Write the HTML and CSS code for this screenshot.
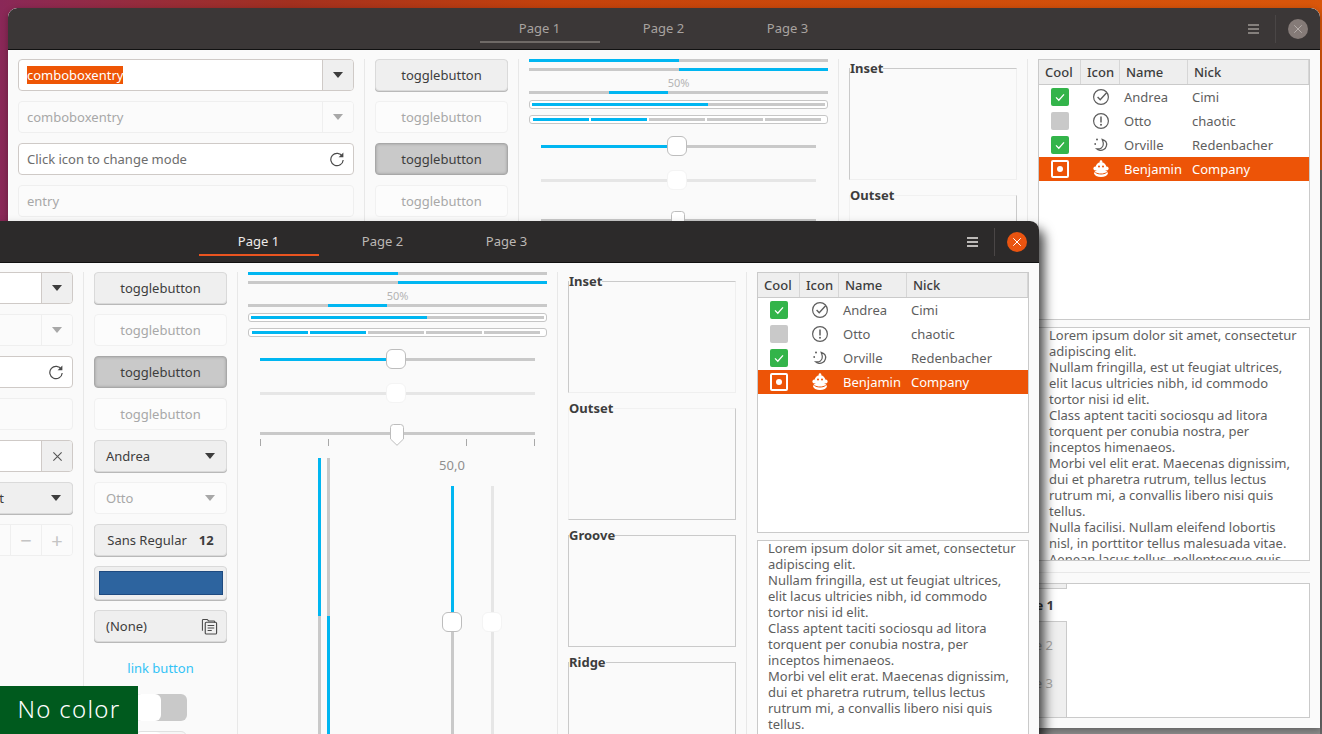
FILE: index.html
```html
<!DOCTYPE html>
<html lang="en">

<head>
    <meta charset="UTF-8">
    <title>Widget Factory</title>
    <link rel="stylesheet" href="styles.css">
</head>

<body>
    <!-- icons used by the tree and the buttons -->
    <svg class="sprite" aria-hidden="true">
        <symbol id="i-check" viewBox="0 0 18 18">
            <circle cx="9" cy="9" r="7.4" fill="none" stroke="currentColor" stroke-width="1.2"/>
            <path d="M5.6 9l2.6 2.8 6.4-7" fill="none" stroke="currentColor" stroke-width="1.4"/>
        </symbol>
        <symbol id="i-warn" viewBox="0 0 18 18">
            <circle cx="9" cy="9" r="7.4" fill="none" stroke="currentColor" stroke-width="1.2"/>
            <path d="M9 4.4v6" fill="none" stroke="currentColor" stroke-width="1.5"/>
            <circle cx="9" cy="12.8" r="1" fill="currentColor"/>
        </symbol>
        <symbol id="i-moon" viewBox="0 0 18 18">
            <path d="M10.2 3.4c3.4 1 5 3.6 4.2 6.6-.9 3.2-4 5-7.2 4.2-1-.2-1.8-.7-2.500-1.400 3.600.6 6.800-1.200 6.600-5-.1-1.600-.5-3-1.100-4.400z" fill="none" stroke="currentColor" stroke-width="1.2"/>
            <circle cx="5" cy="3.6" r="1" fill="currentColor"/>
            <circle cx="3.2" cy="8" r=".9" fill="currentColor"/>
        </symbol>
        <symbol id="i-monkey" viewBox="0 0 18 18">
            <circle cx="9" cy="1.500" r="1.300" fill="currentColor"/>
            <circle cx="9" cy="7.500" r="5.400" fill="currentColor"/>
            <circle cx="3.300" cy="8.500" r="1.900" fill="currentColor"/>
            <circle cx="14.700" cy="8.500" r="1.900" fill="currentColor"/>
            <ellipse cx="9" cy="13.300" rx="6.800" ry="3.800" fill="currentColor"/>
            <path d="M3.400 12.500c3 2 8.200 2 11.200 0" stroke="#ed5407" stroke-width="1" fill="none"/>
            <circle cx="7" cy="6.500" r="1" fill="#ed5407"/>
            <circle cx="11" cy="6.500" r="1" fill="#ed5407"/>
        </symbol>
        <symbol id="i-reload" viewBox="0 0 16 16">
            <path d="M13.4 5.400A6.200 6.200 0 1 0 14.200 9" fill="none" stroke="currentColor" stroke-width="1.200"/>
            <path d="M14.400 1.400v4.800H9.600z" fill="currentColor"/>
        </symbol>
        <symbol id="i-clear" viewBox="0 0 12 12">
            <path d="M1.500 1.500l9 9M10.500 1.500l-9 9" fill="none" stroke="currentColor" stroke-width="1.200"/>
        </symbol>
        <symbol id="i-files" viewBox="0 0 18 18">
            <path d="M1.500 13.500V2.400c0-.5.4-.9.9-.9h4.200l1.400 1.600h5.600c.5 0 .9.4.9.9v1" fill="none" stroke="currentColor" stroke-width="1.100"/>
            <rect x="4.500" y="4.500" width="12" height="12.500" rx="1.200" fill="none" stroke="currentColor" stroke-width="1.200"/>
            <path d="M7 8h7M7 10.600h7M7 13.200h4.400" fill="none" stroke="currentColor" stroke-width="1.100"/>
        </symbol>
        <symbol id="i-mark" viewBox="0 0 14 22">
            <path d="M3.500.5h7a3 3 0 0 1 3 3V15L7 21.300.5 15V3.500a3 3 0 0 1 3-3z" fill="#fff" stroke="#bdbdbd"/>
        </symbol>
    </svg>

    <!-- 后面的窗口，下面被挡住的部分不用写 -->
    <section class="window window-back">
        <header class="titlebar">
            <div></div>
            <nav class="tabs">
                <a class="tab tab-on">Page 1</a>
                <a class="tab">Page 2</a>
                <a class="tab">Page 3</a>
            </nav>
            <div class="title-actions">
                <span class="menu-icon"><i></i><i></i><i></i></span>
                <span class="title-sep"></span>
                <span class="close-btn"><svg><use href="#i-clear"/></svg></span>
            </div>
        </header>
        <main class="content">
            <div class="col col-entries">
                <div class="entry"><span class="entry-text"><span class="sel">comboboxentry</span></span><span class="entry-btn"><i class="arrow"></i></span></div>
                <div class="entry off"><span class="entry-text">comboboxentry</span><span class="entry-btn"><i class="arrow"></i></span></div>
                <div class="entry"><span class="entry-text hint">Click icon to change mode</span><svg class="entry-icon"><use href="#i-reload"/></svg></div>
                <div class="entry off"><span class="entry-text">entry</span></div>
            </div>
            <div class="sep"></div>
            <div class="col col-buttons">
                <div class="btn">togglebutton</div>
                <div class="btn off">togglebutton</div>
                <div class="btn pressed">togglebutton</div>
                <div class="btn off">togglebutton</div>
            </div>
            <div class="sep"></div>
            <div class="col col-progress">
                <div class="bar"><span class="fill w-half"></span></div>
                <div class="bar bar-rev"><span class="fill w-half"></span></div>
                <div class="pct">50%</div>
                <div class="bar bar-pulse"><span class="fill"></span></div>
                <div class="box"><div class="bar"><span class="fill w-level"></span></div></div>
                <div class="box box-steps"><i class="on"></i><i class="on"></i><i></i><i></i><i></i></div>
                <div class="slider"><span class="fill"></span><span class="thumb"></span></div>
                <div class="slider slider-off"><span class="thumb"></span></div>
                <div class="slider slider-marks">
                    <svg class="mark"><use href="#i-mark"/></svg>
                </div>
            </div>
            <div class="sep"></div>
            <div class="col col-frames">
                <fieldset class="frame inset"><legend>Inset</legend></fieldset>
                <fieldset class="frame outset"><legend>Outset</legend></fieldset>
            </div>
            <div class="sep"></div>
            <div class="col col-tree">
                <div class="tree">
                    <div class="tree-head"><span>Cool</span><span>Icon</span><span>Name</span><span>Nick</span></div>
                    <div class="tree-row"><span class="check on"><svg viewBox="0 0 18 18"><path d="M5 9.400l2.800 2.800 5.200-5.800"/></svg></span><svg class="tree-icon"><use href="#i-check"/></svg><span>Andrea</span><span>Cimi</span></div>
                    <div class="tree-row"><span class="check"></span><svg class="tree-icon"><use href="#i-warn"/></svg><span>Otto</span><span>chaotic</span></div>
                    <div class="tree-row"><span class="check on"><svg viewBox="0 0 18 18"><path d="M5 9.400l2.800 2.800 5.200-5.800"/></svg></span><svg class="tree-icon"><use href="#i-moon"/></svg><span>Orville</span><span>Redenbacher</span></div>
                    <div class="tree-row picked"><span class="check mixed"><i></i></span><svg class="tree-icon"><use href="#i-monkey"/></svg><span>Benjamin</span><span>Company</span></div>
                </div>
                <div class="textview">
                    <div class="tv-text">
                        Lorem ipsum dolor sit amet, consectetur<br>adipiscing elit.<br>
                        Nullam fringilla, est ut feugiat ultrices,<br>elit lacus ultricies nibh, id commodo<br>tortor nisi id elit.<br>
                        Class aptent taciti sociosqu ad litora<br>torquent per conubia nostra, per<br>inceptos himenaeos.<br>
                        Morbi vel elit erat. Maecenas dignissim,<br>dui et pharetra rutrum, tellus lectus<br>rutrum mi, a convallis libero nisi quis<br>tellus.<br>
                        Nulla facilisi. Nullam eleifend lobortis<br>nisl, in porttitor tellus malesuada vitae.<br>Aenean lacus tellus, pellentesque quis
                    </div>
                </div>
                <div class="hsep"></div>
                <div class="notebook">
                    <div class="nb-tabs">
                        <div class="nb-cap"></div>
                        <div class="nb-tab nb-on">Page 1</div>
                        <div class="nb-rest"><div class="nb-tab">Page 2</div><div class="nb-tab">Page 3</div></div>
                    </div>
                    <div class="nb-page"></div>
                </div>
            </div>
        </main>
    </section>

    <!-- 前面的窗口，左边超出屏幕 -->
    <section class="window window-front">
        <header class="titlebar">
            <div></div>
            <nav class="tabs">
                <a class="tab tab-on">Page 1</a>
                <a class="tab">Page 2</a>
                <a class="tab">Page 3</a>
            </nav>
            <div class="title-actions">
                <span class="menu-icon"><i></i><i></i><i></i></span>
                <span class="title-sep"></span>
                <span class="close-btn"><svg><use href="#i-clear"/></svg></span>
            </div>
        </header>
        <main class="content">
            <div class="col col-entries">
                <div class="entry"><span class="entry-text"></span><span class="entry-btn"><i class="arrow"></i></span></div>
                <div class="entry off"><span class="entry-text"></span><span class="entry-btn"><i class="arrow"></i></span></div>
                <div class="entry"><span class="entry-text"></span><svg class="entry-icon"><use href="#i-reload"/></svg></div>
                <div class="entry off"><span class="entry-text"></span></div>
                <div class="entry"><span class="entry-text"></span><span class="entry-btn"><svg class="clear-icon"><use href="#i-clear"/></svg></span></div>
                <div class="btn btn-combo btn-right"><span>Right</span><i class="arrow"></i></div>
                <div class="entry off"><span class="entry-text"></span><span class="entry-btn spin">−</span><span class="entry-btn spin">+</span></div>
            </div>
            <div class="sep"></div>
            <div class="col col-buttons">
                <div class="btn">togglebutton</div>
                <div class="btn off">togglebutton</div>
                <div class="btn pressed">togglebutton</div>
                <div class="btn off">togglebutton</div>
                <div class="btn btn-combo"><span>Andrea</span><i class="arrow"></i></div>
                <div class="btn btn-combo off"><span>Otto</span><i class="arrow"></i></div>
                <div class="btn btn-font"><span>Sans Regular</span><b>12</b></div>
                <div class="btn btn-color"><span class="swatch"></span></div>
                <div class="btn btn-combo"><span>(None)</span><svg class="file-icon"><use href="#i-files"/></svg></div>
                <a class="link-btn">link button</a>
                <div class="switch"><span class="knob"></span></div>
                <div class="switch switch-off"><span class="knob"></span></div>
            </div>
            <div class="sep"></div>
            <div class="col col-progress">
                <div class="bar"><span class="fill w-half"></span></div>
                <div class="bar bar-rev"><span class="fill w-half"></span></div>
                <div class="pct">50%</div>
                <div class="bar bar-pulse"><span class="fill"></span></div>
                <div class="box"><div class="bar"><span class="fill w-level"></span></div></div>
                <div class="box box-steps"><i class="on"></i><i class="on"></i><i></i><i></i><i></i></div>
                <div class="slider"><span class="fill"></span><span class="thumb"></span></div>
                <div class="slider slider-off"><span class="thumb"></span></div>
                <div class="slider slider-marks">
                    <svg class="mark"><use href="#i-mark"/></svg>
                    <i class="tick t1"></i><i class="tick t2"></i><i class="tick t3"></i><i class="tick t4"></i>
                </div>
                <div class="verticals">
                    <div class="vbar"><span class="vfill"></span></div>
                    <div class="vbar vbar-rev"><span class="vfill"></span></div>
                    <div class="vslider"><label>50,0</label><div class="vtrack"><span class="vfill"></span><span class="thumb"></span></div></div>
                    <div class="vslider vslider-off"><label></label><div class="vtrack"><span class="thumb"></span></div></div>
                </div>
            </div>
            <div class="sep"></div>
            <div class="col col-frames">
                <fieldset class="frame inset"><legend>Inset</legend></fieldset>
                <fieldset class="frame outset"><legend>Outset</legend></fieldset>
                <fieldset class="frame groove"><legend>Groove</legend></fieldset>
                <fieldset class="frame ridge"><legend>Ridge</legend></fieldset>
            </div>
            <div class="sep"></div>
            <div class="col col-tree">
                <div class="tree">
                    <div class="tree-head"><span>Cool</span><span>Icon</span><span>Name</span><span>Nick</span></div>
                    <div class="tree-row"><span class="check on"><svg viewBox="0 0 18 18"><path d="M5 9.400l2.800 2.800 5.200-5.800"/></svg></span><svg class="tree-icon"><use href="#i-check"/></svg><span>Andrea</span><span>Cimi</span></div>
                    <div class="tree-row"><span class="check"></span><svg class="tree-icon"><use href="#i-warn"/></svg><span>Otto</span><span>chaotic</span></div>
                    <div class="tree-row"><span class="check on"><svg viewBox="0 0 18 18"><path d="M5 9.400l2.800 2.800 5.200-5.800"/></svg></span><svg class="tree-icon"><use href="#i-moon"/></svg><span>Orville</span><span>Redenbacher</span></div>
                    <div class="tree-row picked"><span class="check mixed"><i></i></span><svg class="tree-icon"><use href="#i-monkey"/></svg><span>Benjamin</span><span>Company</span></div>
                </div>
                <div class="textview">
                    <div class="tv-text">
                        Lorem ipsum dolor sit amet, consectetur<br>adipiscing elit.<br>
                        Nullam fringilla, est ut feugiat ultrices,<br>elit lacus ultricies nibh, id commodo<br>tortor nisi id elit.<br>
                        Class aptent taciti sociosqu ad litora<br>torquent per conubia nostra, per<br>inceptos himenaeos.<br>
                        Morbi vel elit erat. Maecenas dignissim,<br>dui et pharetra rutrum, tellus lectus<br>rutrum mi, a convallis libero nisi quis<br>tellus.
                    </div>
                </div>
            </div>
        </main>
    </section>

    <div class="badge">No color</div>
</body>

</html>
```

FILE: styles.css
```css
/* desktop behind the windows */
html,
body {
    height: 100%;
    margin: 0;
    overflow: hidden;
}

body {
    position: relative;
    font-family: "Noto Sans", "Open Sans", sans-serif;
    font-size: 13px;
    color: #3d3d3d;
    background:
        linear-gradient(#666 0 0) right 170px / 2px 100% no-repeat,
        linear-gradient(#8a8a8a 0 0) left 728px / 100% 6px no-repeat,
        linear-gradient(90deg, #8a2858 0, #a3301f 22%, #c4420c 42%, #d9560a 100%);
}

.sprite {
    display: none;
}

/* windows */
.window {
    position: absolute;
    width: 1312px;
    height: 720px;
    border-radius: 9px 9px 0 0;
    background: #fafafa;
    overflow: hidden;
}

.window-back {
    left: 8px;
    top: 8px;
    box-shadow: 0 2px 6px rgba(0, 0, 0, .3);
}

.window-front {
    left: -273px;
    top: 221px;
    overflow: visible;
    box-shadow: 5px 8px 12px rgba(0, 0, 0, .75);
}

.titlebar {
    display: grid;
    grid-template-columns: 1fr auto 1fr;
    height: 41px;
    border-bottom: 1px solid #111;
    border-radius: 9px 9px 0 0;
    background: #3b3737;
    color: #a8a3a0;
}

.window-front .titlebar {
    background: #2c2a2a;
    color: #bcb8b5;
}

.tabs {
    display: flex;
}

.tab {
    width: 120px;
    height: 35px;
    margin: 0 2px;
    padding: 12px 1px 0 0;
    box-sizing: border-box;
    border-bottom: 2px solid transparent;
    line-height: 17px;
    text-align: center;
}

.tab-on {
    border-bottom-color: #6f6a67;
}

.window-front .tab-on {
    border-bottom-color: #e95420;
    color: #efecea;
}

.title-actions {
    display: flex;
    align-items: center;
    justify-content: flex-end;
    padding-right: 12px;
}

.menu-icon {
    display: flex;
    flex-direction: column;
    gap: 2px;
    width: 11px;
    margin-right: 16px;
    color: #85807d;
}

.window-front .menu-icon {
    color: #bdbab8;
}

.menu-icon i {
    height: 2px;
    background: currentColor;
}

.title-sep {
    width: 1px;
    height: 28px;
    margin-right: 12px;
    background: #4a4646;
}

.close-btn {
    display: flex;
    align-items: center;
    justify-content: center;
    width: 20px;
    height: 20px;
    border-radius: 50%;
    background: #857b78;
    color: #b5adaa;
}

.window-front .close-btn {
    background: #ea5410;
    color: #fff;
}

.close-btn svg {
    width: 10px;
    height: 10px;
}

/* columns */
.content {
    display: flex;
    height: 659px;
    padding: 9px 10px 10px;
}

.col {
    display: flex;
    flex-direction: column;
    flex: none;
}

.sep {
    flex: none;
    width: 1px;
    margin: 0 10px;
    background: #e8e8e8;
}

.col-entries {
    width: 336px;
    gap: 10px;
}

.col-buttons {
    width: 133px;
    gap: 10px;
}

.col-progress {
    width: 299px;
}

.col-frames {
    width: 168px;
    padding-top: 1px;
    gap: 7px;
}

.col-tree {
    width: 272px;
}

/* entries */
.entry {
    display: flex;
    align-items: center;
    height: 32px;
    box-sizing: border-box;
    border: 1px solid #cfcac7;
    border-radius: 4px;
    background: #fff;
    overflow: hidden;
}

.entry.off {
    border-color: #efefef;
    background: #fbfbfb;
    color: #a8a8a8;
}

.entry-text {
    flex: 1;
    padding-left: 8px;
}

.sel {
    background: #ee5505;
    color: #fff;
}

.hint {
    color: #6d6d6d;
}

.entry-icon {
    width: 16px;
    height: 16px;
    margin-right: 8px;
    color: #4a4a4a;
}

.entry-btn {
    display: flex;
    align-items: center;
    justify-content: center;
    flex: none;
    width: 30px;
    height: 100%;
    border-left: 1px solid #cfcac7;
    background: #efefef;
}

.off .entry-btn {
    border-left-color: #efefef;
    background: #fbfbfb;
}

.spin {
    color: #c4c4c4;
    font-size: 20px;
}

.clear-icon {
    width: 11px;
    height: 11px;
    color: #555;
}

.arrow {
    width: 0;
    height: 0;
    border: 5px solid transparent;
    border-top: 6px solid #3d3d3d;
    border-bottom: 0;
}

.off .arrow {
    border-top-color: #a8a8a8;
}

/* buttons */
.btn {
    display: flex;
    align-items: center;
    justify-content: center;
    height: 32px;
    box-sizing: border-box;
    border: 1px solid #dadada;
    border-radius: 4px;
    background: #efefef;
    box-shadow: 0 1px #b9b9b9;
}

.btn.off {
    border-color: #f1f1f1;
    background: #fcfcfc;
    box-shadow: none;
    color: #a8a8a8;
}

.pressed {
    border-color: #a8a8a8;
    background: #c9c9c9;
    box-shadow: inset 0 0 3px #9a9a9a;
}

.btn-combo {
    justify-content: space-between;
    padding: 0 11px;
}

.btn-right {
    justify-content: flex-end;
    gap: 47px;
}

.btn-font {
    gap: 12px;
}

.btn-color {
    height: 34px;
}

.swatch {
    width: 124px;
    height: 24px;
    box-sizing: border-box;
    border: 1px solid #1e4a80;
    background: #2d649f;
}

.file-icon {
    width: 17px;
    height: 17px;
    margin-right: -3px;
    color: #4a4a4a;
}

.link-btn {
    height: 32px;
    line-height: 32px;
    text-align: center;
    color: #33c3f6;
}

.switch {
    position: relative;
    flex: none;
    align-self: center;
    width: 52px;
    height: 27px;
    border-radius: 6px;
    background: #c9c9c9;
}

.switch-off {
    box-sizing: border-box;
    border: 1px solid #e0e0e0;
    background: #f6f6f6;
}

.knob {
    position: absolute;
    left: 0;
    top: 0;
    width: 26px;
    height: 100%;
    border-radius: 6px;
    background: #fff;
}

/* progress bars */
.bar {
    position: relative;
    flex: none;
    height: 3px;
    background: #c9c9c9;
}

.bar + .bar {
    margin-top: 6px;
}

.fill {
    position: absolute;
    left: 0;
    top: 0;
    height: 100%;
    background: #00b6f1;
}

.w-half {
    width: 50%;
}

.w-level {
    width: 60%;
}

.bar-rev .fill {
    left: 50%;
}

.bar-pulse .fill {
    left: 80px;
    width: 59px;
}

.pct {
    margin-top: 5px;
    height: 14px;
    line-height: 14px;
    font-size: 11px;
    text-align: center;
    color: #b4b4b4;
}

.pct + .bar {
    margin-top: 1px;
}

.box {
    flex: none;
    margin-top: 6px;
    padding: 2px;
    border: 1px solid #c6c6c6;
    border-radius: 3px;
    background: #fff;
}

.box-steps {
    display: flex;
    gap: 2px;
    height: 3px;
    padding: 2px 6px 2px 3px;
}

.box-steps i {
    flex: 1;
    background: #c9c9c9;
}

.box-steps i.on {
    background: #00b6f1;
}

/* sliders */
.slider {
    position: relative;
    flex: none;
    height: 3px;
    margin: 21px 12px 0;
    background: #c9c9c9;
}

.slider .fill {
    width: 126px;
}

.slider-off {
    margin-top: 31px;
    background: #e6e6e6;
}

.slider-marks {
    margin-top: 37px;
}

.thumb {
    position: absolute;
    left: 126px;
    top: -9px;
    width: 20px;
    height: 20px;
    box-sizing: border-box;
    border: 1px solid #bdbdbd;
    border-radius: 6px;
    background: #fff;
}

.slider-off .thumb,
.vslider-off .thumb {
    border-color: #f4f4f4;
}

.mark {
    position: absolute;
    left: 130px;
    top: -8px;
    width: 14px;
    height: 22px;
}

.tick {
    position: absolute;
    top: 7px;
    width: 1px;
    height: 7px;
    background: #a8a8a8;
}

.t1 { left: 0; }
.t2 { left: 68px; }
.t3 { left: 206px; }
.t4 { left: 274px; }

.verticals {
    display: flex;
    flex: 1;
    margin-top: 23px;
    padding-left: 70px;
}

.vbar,
.vtrack {
    position: relative;
    flex: none;
    width: 3px;
    background: #c9c9c9;
}

.vbar + .vbar {
    margin-left: 6px;
}

.vfill {
    position: absolute;
    left: 0;
    top: 0;
    width: 100%;
    height: 158px;
    background: #00b6f1;
}

.vbar-rev .vfill {
    top: 158px;
    height: auto;
    bottom: 0;
}

.vslider {
    display: flex;
    flex-direction: column;
    align-items: center;
    flex: none;
    width: 40px;
    margin-left: 102px;
}

.vslider-off {
    margin-left: 0;
}

.vslider label {
    height: 28px;
    line-height: 15px;
    color: #8f8f8f;
}

.vtrack {
    flex: 1;
}

.vslider-off .vtrack {
    background: #e6e6e6;
}

.vtrack .vfill {
    height: 126px;
}

.vtrack .thumb {
    left: -9px;
    top: 126px;
}

/* frames */
.frame {
    flex: none;
    height: 120px;
    min-width: 0;
    margin: 0;
    padding: 0;
    box-sizing: border-box;
    border: 1px solid #cacaca;
}

.frame legend {
    padding: 0;
    font-weight: 700;
    line-height: 16px;
}

.inset {
    border-right-color: #efefef;
    border-bottom-color: #efefef;
}

.outset {
    border-top-color: #f1f1f1;
    border-left-color: #f1f1f1;
}

/* tree */
.tree {
    flex: none;
    height: 261px;
    box-sizing: border-box;
    border: 1px solid #cacaca;
    background: #fff;
}

.tree-head,
.tree-row {
    display: grid;
    grid-template-columns: 42px 39px 68px 1fr;
    align-items: center;
}

.tree-head {
    height: 24px;
    border-bottom: 1px solid #cacaca;
    background: #eeeeee;
    font-weight: 500;
}

.tree-head span {
    height: 100%;
    padding-left: 6px;
    box-sizing: border-box;
    border-right: 1px solid #d6d6d6;
    line-height: 24px;
}

.tree-row {
    height: 24px;
    color: #5e5e5e;
}

.tree-row span:nth-child(n+3) {
    padding-left: 4px;
}

.picked {
    background: #ed5407;
    color: #fff;
}

.check {
    display: flex;
    align-items: center;
    justify-content: center;
    justify-self: center;
    width: 18px;
    height: 18px;
    box-sizing: border-box;
    border-radius: 2px;
    background: #c9c9c9;
}

.check.on {
    background: #33b44a;
}

.check svg {
    width: 18px;
    height: 18px;
    fill: none;
    stroke: #fff;
    stroke-width: 1.3;
}

.check.mixed {
    border: 2px solid #fff;
    background: none;
}

.check.mixed i {
    width: 6px;
    height: 6px;
    border-radius: 50%;
    background: #fff;
}

.tree-icon {
    justify-self: center;
    width: 18px;
    height: 18px;
    color: #5e5e5e;
}

.picked .tree-icon {
    color: #fff;
}

/* text view */
.textview {
    flex: none;
    height: 234px;
    margin-top: 7px;
    padding: 0 10px;
    box-sizing: border-box;
    border: 1px solid #cacaca;
    background: #fff;
    line-height: 16px;
    color: #5e5e5e;
    white-space: nowrap;
    overflow: hidden;
}

.tv-text {
    margin-top: -1px;
}

.hsep {
    flex: none;
    height: 1px;
    margin-top: 11px;
    background: #e8e8e8;
}

/* notebook, its tabs run in under the front window */
.notebook {
    display: flex;
    flex: none;
    height: 135px;
    margin: 10px 0 0 -40px;
    box-sizing: border-box;
    border: 1px solid #cacaca;
    background: #fff;
}

.nb-tabs {
    display: flex;
    flex-direction: column;
    flex: none;
    width: 68px;
}

.nb-cap {
    height: 4px;
    border-right: 1px solid #cacaca;
    border-bottom: 1px solid #cacaca;
    background: #efefef;
}

.nb-tab {
    height: 38px;
    padding-right: 13px;
    line-height: 38px;
    text-align: right;
    color: #a8a8a8;
}

.nb-on {
    height: 32px;
    line-height: 32px;
    font-weight: 700;
    color: #3d3d3d;
}

.nb-rest {
    flex: 1;
    padding-top: 4px;
    border-top: 1px solid #cacaca;
    border-right: 1px solid #cacaca;
    background: #efefef;
}

.nb-page {
    flex: 1;
}

/* green label in the corner */
.badge {
    position: absolute;
    left: 0;
    bottom: 0;
    width: 138px;
    height: 48px;
    background: #005a1e;
    color: #fff;
    font-size: 24px;
    font-weight: 300;
    letter-spacing: 1.3px;
    line-height: 45px;
    text-align: center;
}
```
